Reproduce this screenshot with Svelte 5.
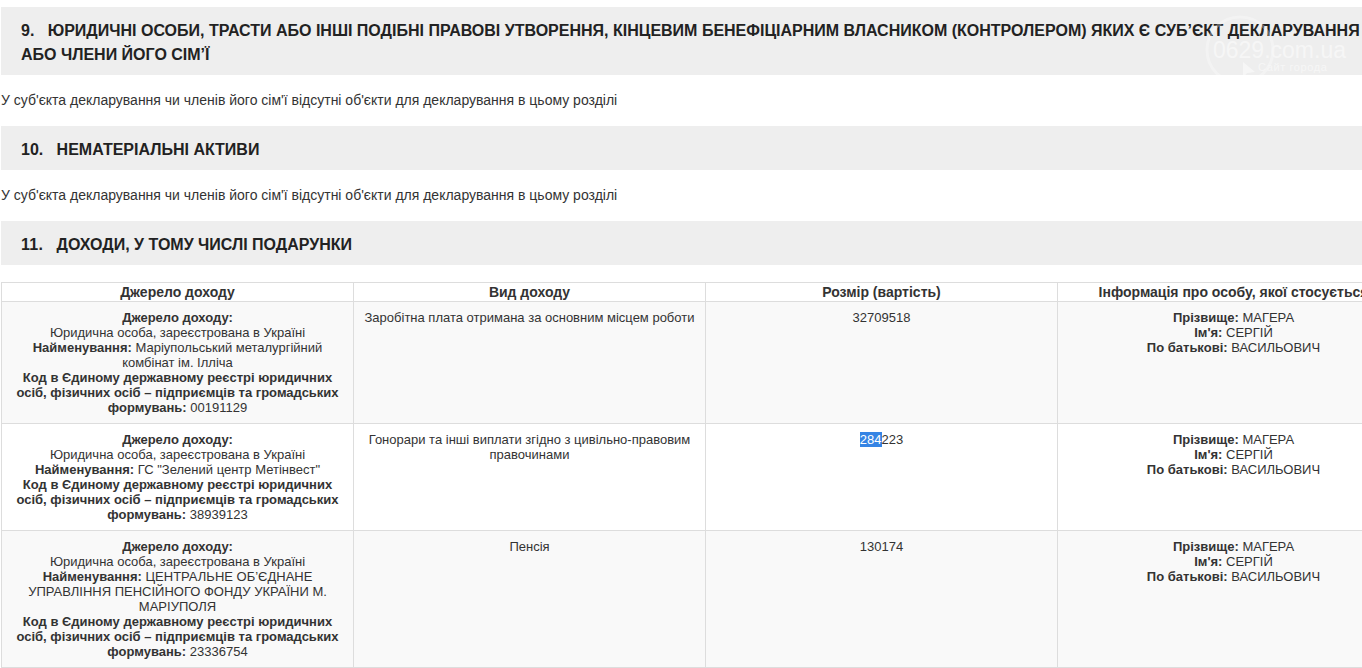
<script>
	const person = [
		['Прізвище:', 'МАГЕРА'],
		["Ім'я:", 'СЕРГІЙ'],
		['По батькові:', 'ВАСИЛЬОВИЧ']
	];

	const rows = [
		{
			name: 'Маріупольський металургійний комбінат ім. Ілліча',
			code: '00191129',
			kind: 'Заробітна плата отримана за основним місцем роботи',
			amount: '32709518'
		},
		{
			name: 'ГС "Зелений центр Метінвест"',
			code: '38939123',
			kind: 'Гонорари та інші виплати згідно з цивільно-правовим правочинами',
			selected: '284',
			amount: '223'
		},
		{
			name: 'ЦЕНТРАЛЬНЕ ОБ’ЄДНАНЕ УПРАВЛІННЯ ПЕНСІЙНОГО ФОНДУ УКРАЇНИ М. МАРІУПОЛЯ',
			code: '23336754',
			kind: 'Пенсія',
			amount: '130174'
		}
	];

	const empty = "У суб'єкта декларування чи членів його сім'ї відсутні об'єкти для декларування в цьому розділі";
</script>

<div class="viewport">
	<main class="page">
		<h2>9. &nbsp; ЮРИДИЧНІ ОСОБИ, ТРАСТИ АБО ІНШІ ПОДІБНІ ПРАВОВІ УТВОРЕННЯ, КІНЦЕВИМ БЕНЕФІЦІАРНИМ ВЛАСНИКОМ (КОНТРОЛЕРОМ) ЯКИХ Є СУБ’ЄКТ ДЕКЛАРУВАННЯ АБО ЧЛЕНИ ЙОГО СІМ’Ї</h2>
		<p>{empty}</p>
		<h2>10. &nbsp; НЕМАТЕРІАЛЬНІ АКТИВИ</h2>
		<p>{empty}</p>
		<h2><span class="num">11.</span> &nbsp; ДОХОДИ, У ТОМУ ЧИСЛІ ПОДАРУНКИ</h2>

		<table>
			<thead>
				<tr>
					<th>Джерело доходу</th>
					<th>Вид доходу</th>
					<th>Розмір (вартість)</th>
					<th>Інформація про особу, якої стосується</th>
				</tr>
			</thead>
			<tbody>
				{#each rows as row}
					<tr>
						<td>
							<b>Джерело доходу:</b><br />
							Юридична особа, зареєстрована в Україні<br />
							<b>Найменування:</b> {row.name}<br />
							<b>Код в Єдиному державному реєстрі юридичних осіб, фізичних осіб – підприємців та громадських формувань:</b> {row.code}
						</td>
						<td>{row.kind}</td>
						<td>{#if row.selected}<span class="selected">{row.selected}</span>{/if}{row.amount}</td>
						<td>
							{#each person as [label, value]}
								<b>{label}</b> {value}<br />
							{/each}
						</td>
					</tr>
				{/each}
			</tbody>
		</table>
	</main>

	<div class="watermark">
		<svg class="mark" width="72" height="72" viewBox="0 0 72 72">
			<circle cx="35" cy="35" r="33" fill="none" stroke="#fff" stroke-width="3" opacity="0.6" />
			<path d="M38 47 L38 63 L42 58 L50 57 Z" fill="#fff" />
		</svg>
		<span class="brand">0629<span class="dim">.com.ua</span></span>
		<span class="tag">Сайт города<br />Мариуполя</span>
	</div>
</div>

<style>
	:global(body) {
		background: #fff;
	}

	.viewport {
		position: relative;
		width: 1362px;
		height: 668px;
		overflow: hidden;
		font-family: 'Liberation Sans', Arial, sans-serif;
		color: #333;
	}

	.page {
		width: 1408px;
		margin-left: 1px;
		padding-top: 7px;
	}

	h2 {
		margin: 0;
		padding: 12px 20px 8px;
		background: #eee;
		font-size: 16px;
		line-height: 24px;
		font-weight: 700;
		color: #222;
	}

	.num {
		letter-spacing: 0.3px;
	}

	p {
		margin: 15px 0 16px;
		font-size: 14px;
		line-height: 20px;
	}

	table {
		width: 1409px;
		margin-top: 17px;
		border-collapse: collapse;
		table-layout: fixed;
		font-size: 13px;
		line-height: 15px;
	}

	th,
	td {
		border: 1px solid #ddd;
		text-align: center;
		vertical-align: top;
	}

	th {
		padding: 1px 8px 0;
		font-size: 14px;
		line-height: 17px;
		font-weight: 700;
	}

	td {
		padding: 8px;
	}

	td:first-child {
		padding-left: 14px;
		padding-right: 14px;
	}

	tbody tr:nth-child(odd) {
		background: #f9f9f9;
	}

	.selected {
		background: #3584e4;
		color: #fff;
	}

	.watermark {
		position: absolute;
		left: 1205px;
		top: 15px;
		width: 157px;
		height: 80px;
		opacity: 0.5;
		pointer-events: none;
		color: #fff;
		white-space: nowrap;
	}

	.mark {
		display: block;
	}

	.brand {
		position: absolute;
		left: 8px;
		top: 21px;
		font-size: 23px;
		line-height: 28px;
	}

	.tag {
		position: absolute;
		left: 53px;
		top: 45px;
		font-size: 11px;
		line-height: 15px;
		letter-spacing: 0.6px;
	}
</style>
